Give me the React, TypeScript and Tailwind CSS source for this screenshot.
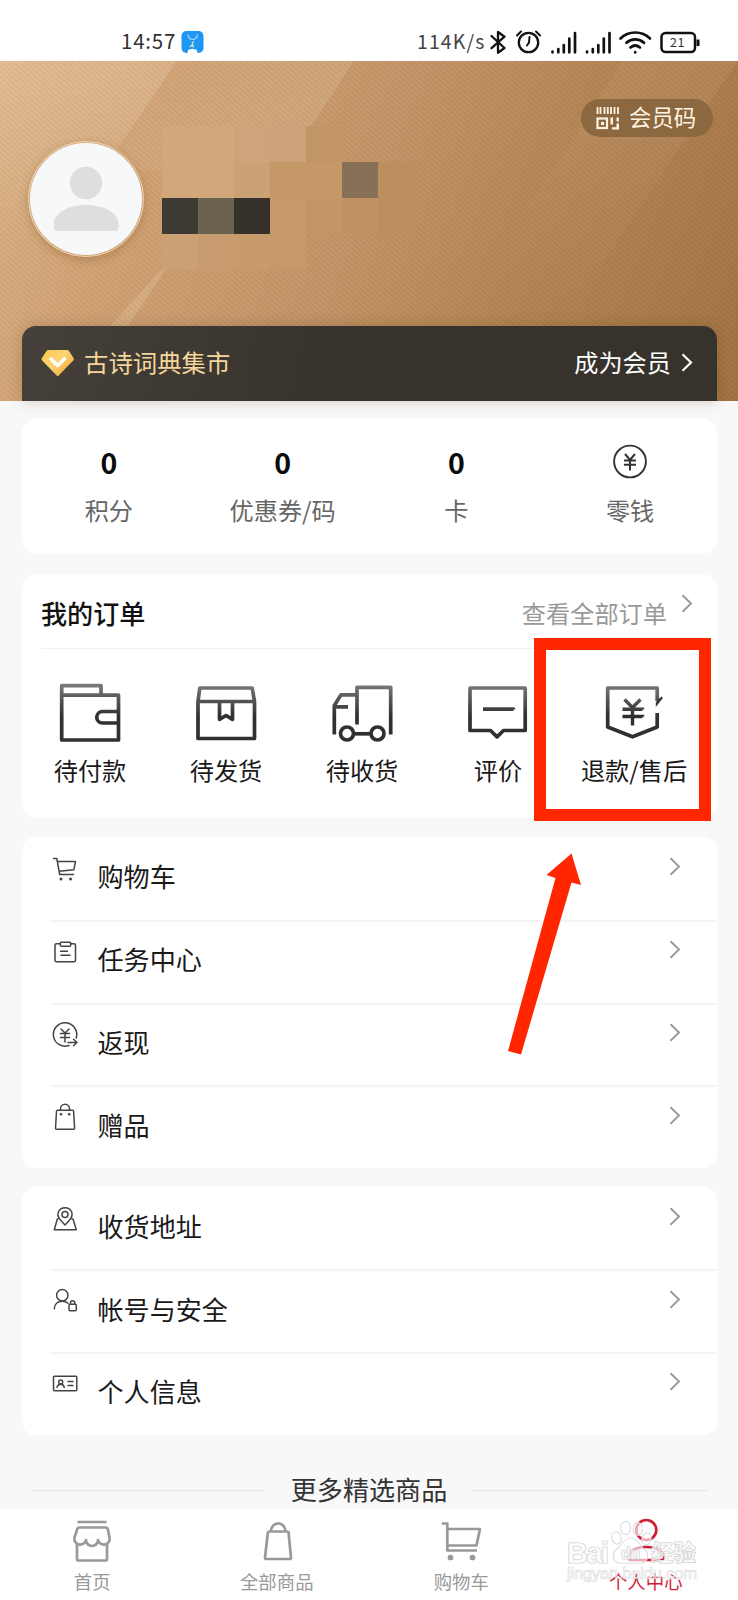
import React from "react";

type SvgProps = { box: string; w: number; h: number; className?: string; children: React.ReactNode };

function Draw({ box, w, h, className = "", children }: SvgProps) {
  return (
    <svg viewBox={box} width={w} height={h} fill="none" className={`block shrink-0 ${className}`}>
      {children}
    </svg>
  );
}

function Chevron({ className = "", width = 1.9 }: { className?: string; width?: number }) {
  return (
    <Draw box="0 0 12 19" w={12} h={19} className={className}>
      <path d="M1.5 1.2L10 9.5L1.5 17.8" stroke="currentColor" strokeWidth={width} />
    </Draw>
  );
}

function StatusBar() {
  return (
    <div className="flex h-[61px] shrink-0 items-start bg-white pl-[121px] pt-[28px] text-[#333]">
      <span className="w-[60px] text-[20.5px] font-normal leading-[25px] tracking-[0.8px]">14:57</span>
      <Draw box="0 0 24 24" w={24} h={24} className="mt-[2px]">
        <rect x="0.5" y="1" width="22" height="22" rx="5" fill="#1f96f3" />
        <path d="M7 4.5a4.7 5 0 0 0 9.4 0" stroke="#a6d8ff" strokeWidth="1.2" />
        <path d="M6.500 23c0-3.500 2-4.500 3-3.500c1-1 3-1 4 0c1.500-1 3 1 3 3.500z" fill="#fff" />
        <path d="M9 17l2.500-2.500l1 3M11 13l2 -1.500" stroke="#cfe3b8" strokeWidth="1.500" />
      </Draw>
      <span className="ml-[212px] w-[73px] text-[19.5px] font-normal leading-[25px] tracking-[1.1px] text-[#444]">114K/s</span>
      <Draw box="488 28 215 28" w={215} h={28} className="-ml-[2px] text-black">
        <g stroke="#111" strokeWidth="2.300" strokeLinejoin="round" strokeLinecap="round">
          <path d="M491.500 36l13 12l-6.500 4.700v-20.700l6.500 4.700l-13 11.500" />
          <circle cx="528.500" cy="42.500" r="9.700" />
          <path d="M517 35.500l4-4M540 35.500l-4-4M529.500 37l-.5 5.500l-2 3" strokeWidth="2" />
        </g>
        <g stroke="#111" strokeWidth="2.700" strokeLinecap="round">
          <path d="M552.500 51.500v.8M558.300 49v3.300M563.800 45v7.300M569.300 38.500v13.800M575 33v19.300" />
          <path d="M587 51.500v.8M592.800 49v3.300M598.300 45v7.300M603.800 38.500v13.800M609.500 33v19.300" />
        </g>
        <g stroke="#111" strokeWidth="2.700" strokeLinecap="round">
          <path d="M620.500 38.500c8-8 21.500-8 29.500 0M626.500 42.800c5-4.500 12.500-4.500 17.500 0M630.500 47.500c3-2.500 6.500-2.500 9.500 0" />
          <path d="M635.200 52.200v.2" />
        </g>
        <rect x="661.500" y="33" width="33.500" height="19" rx="4" stroke="#111" strokeWidth="2.500" />
        <path d="M698 39.500v6.500" stroke="#111" strokeWidth="3" />
        <text x="677.500" y="47" textAnchor="middle" fontSize="12.500" fill="#333" letterSpacing="0.5">
          21
        </text>
      </Draw>
    </div>
  );
}

const mosaic = [
  "bg-[#d2a87b]", "bg-[#d2a87b]", "bg-[#cfa47a]", "bg-[#cba27a]", "bg-[#c19565]", "bg-transparent", "bg-transparent",
  "bg-[#d2a87b]", "bg-[#d2a87b]", "bg-[#cba273]", "bg-[#c49867]", "bg-[#c49867]", "bg-[#886f58]", "bg-[#bb8f60]",
  "bg-[#3d3a33]", "bg-[#6c634f]", "bg-[#36312a]", "bg-[#c59a68]", "bg-[#c59568]", "bg-[#c19164]", "bg-[#bb8f60]",
  "bg-[#cba073]", "bg-[#c99c70]", "bg-[#c79b6b]", "bg-[#c6996a]", "bg-transparent", "bg-transparent", "bg-transparent",
];

function Header() {
  return (
    <div className="relative flex h-[340px] shrink-0 flex-col justify-between bg-[linear-gradient(114deg,#dab184_0%,#cfa173_22%,#c19265_48%,#b28353_70%,#a07041_100%)]">
      <svg viewBox="0 61 738 340" className="absolute inset-0 h-full w-full" preserveAspectRatio="none">
        <defs>
          <linearGradient id="shardA" x1="20" y1="250" x2="90" y2="61" gradientUnits="userSpaceOnUse">
            <stop offset="0" stopColor="#fff" stopOpacity="0" />
            <stop offset="1" stopColor="#ffecd8" stopOpacity="0.2" />
          </linearGradient>
          <linearGradient id="shardB" x1="160" y1="61" x2="320" y2="165" gradientUnits="userSpaceOnUse">
            <stop offset="0" stopColor="#fff" stopOpacity="0" />
            <stop offset="1" stopColor="#ffe9cf" stopOpacity="0.18" />
          </linearGradient>
          <linearGradient id="shardC" x1="540" y1="300" x2="690" y2="61" gradientUnits="userSpaceOnUse">
            <stop offset="0" stopColor="#fff" stopOpacity="0" />
            <stop offset="1" stopColor="#ffdcc0" stopOpacity="0.08" />
          </linearGradient>
        </defs>
        <path d="M0 61H177L52 245L0 290Z" fill="url(#shardA)" />
        <path d="M177 61H354L282 170L130 170L104 168Z" fill="url(#shardB)" />
        <path d="M161 270H165L128 326H110Z" fill="#f4d9b8" fillOpacity="0.24" />
        <path d="M623 61H738L560 326H450Z" fill="url(#shardC)" />
      </svg>
      <div className="absolute inset-0 bg-[repeating-linear-gradient(42deg,rgba(120,70,20,0.06)_0px,rgba(120,70,20,0.06)_1.500px,rgba(255,235,200,0.03)_1.500px,rgba(255,235,200,0.03)_4px)]" />

      <div className="relative flex items-start pl-7">
        <div className="mt-[80px] flex h-[116px] w-[116px] items-center justify-center rounded-full border border-[#ecd2b2] shadow-[0_3px_10px_rgba(120,70,20,0.3)]">
          <div className="flex h-[112px] w-[112px] items-center justify-center rounded-full bg-[#f7f8fa]">
            <Draw box="54 166 65 66" w={65} h={66}>
              <circle cx="86" cy="183" r="16.200" fill="#dedede" />
              <path d="M54 228v-5c0-9 13-18 32.300-18s32.300 9 32.300 18v5q0 3-3 3h-58.600q-3 0-3-3z" fill="#dedede" />
            </Draw>
          </div>
        </div>
        <div className="ml-[18px] mt-[65px] grid grid-cols-[repeat(7,36px)] grid-rows-[repeat(4,36px)]">
          {mosaic.map((c, i) => (
            <div key={i} className={c} />
          ))}
        </div>
        <div className="ml-auto mr-[25px] mt-[38px] flex h-[38px] w-[132px] items-center rounded-full bg-[#8c6840] pl-[15px] text-[#fff3e3]">
          <Draw box="0 0 24 24" w={24} h={24}>
            <path d="M1.500 1v7M4.500 1v7M8.500 1v7M11.800 1v7M15 1v7M18.500 1v7M22 1v7" stroke="currentColor" strokeWidth="1.800" />
            <rect x="1.500" y="12.500" width="9.500" height="9.500" stroke="currentColor" strokeWidth="2.200" />
            <path d="M5 16h3v3H5zM14.500 11.500h2.500v7h-2.500zM20.500 11.500h2.300v4h-2.300zM20.500 17.500h2.500v6h-7v-2.200h4.500z" fill="currentColor" />
          </Draw>
          <span className="mb-[4px] ml-[9px] whitespace-nowrap text-[22.400px] leading-8">会员码</span>
        </div>
      </div>

      <div className="relative ml-[22px] mr-[21px] flex h-[75px] items-center rounded-t-[14px] bg-[linear-gradient(100deg,#45403a_0%,#37322b_45%,#37322b_100%)] pl-[19px] pr-[24px] shadow-[0_0_14px_rgba(70,40,10,0.22)]">
        <Draw box="41 349 34 28" w={34} h={28} className="-mt-[2px]">
          <defs>
            <linearGradient id="gem" x1="45" y1="350" x2="70" y2="376" gradientUnits="userSpaceOnUse">
              <stop offset="0" stopColor="#fbc94a" />
              <stop offset="0.45" stopColor="#fcd576" />
              <stop offset="1" stopColor="#f2a32e" />
            </linearGradient>
          </defs>
          <path d="M48.500 350h18.500q1.200 0 2 1l4.700 7.300q.7 1-.2 2l-14.800 15.200q-1 1-2 0l-14.800-15.200q-.9-1-.2-2l4.800-7.300q.8-1 2-1z" fill="url(#gem)" />
          <path d="M51 359l6.700 6.500l6.700-6.500" stroke="#fff" strokeWidth="3.600" strokeLinecap="round" strokeLinejoin="round" />
        </Draw>
        <span className="mb-[4px] ml-[9px] text-[24.400px] leading-8 text-[#f5d79c]">古诗词典集市</span>
        <span className="mb-[4px] ml-auto text-[24.200px] leading-8 text-white">成为会员</span>
        <Chevron className="-mt-[2px] ml-[10px] text-white" width={2.200} />
      </div>
    </div>
  );
}

function Stat({ label, children }: { label: string; children: React.ReactNode }) {
  return (
    <div className="flex w-[174px] flex-col items-center">
      <div className="flex h-[36px] items-center justify-center">{children}</div>
      <span className="mt-[14px] whitespace-nowrap text-[24.200px] leading-8 text-[#666]">{label}</span>
    </div>
  );
}

function Zero() {
  return <span className="text-[28.500px] font-bold leading-9 text-[#0a0a0a]">0</span>;
}

function Stats() {
  return (
    <div className="relative ml-[22px] mr-[21px] mt-[18px] flex h-[135px] shrink-0 rounded-[14px] bg-white pt-[25px]">
      <Stat label="积分"><Zero /></Stat>
      <Stat label="优惠券/码"><Zero /></Stat>
      <Stat label="卡"><Zero /></Stat>
      <Stat label="零钱">
        <Draw box="0 0 36 36" w={36} h={36} className="-mt-[2px]">
          <circle cx="18" cy="18.500" r="15.900" stroke="#333" strokeWidth="1.900" />
          <path d="M13 11l5 6l5-6M18 17v10.500M12 17.500h12M12 21.800h12" stroke="#333" strokeWidth="2" />
        </Draw>
      </Stat>
    </div>
  );
}

const orders = [
  {
    label: "待付款",
    box: "58 682 64 62",
    art: (
      <>
        <path d="M61.700 695.200V685.700H101V695M61.700 695.200H118.500V740H61.700Z" />
        <path d="M118 711.500H102.500a5.700 5.700 0 0 0 0 11.500H118" />
      </>
    ),
  },
  {
    label: "待发货",
    box: "194 682 64 62",
    art: (
      <>
        <path d="M199.800 688H252.200L254.500 701.500H198ZM198 701.500V738.500H254.500V701.500" />
        <path d="M219.500 703V719.300L226 715.500L232.500 719.300V703" />
      </>
    ),
  },
  {
    label: "待收货",
    box: "330 682 64 62",
    art: (
      <>
        <path d="M357 724.500V687.300H390.700V734.500M355.500 694.800H341L334.300 705.500V734.500M335 706.800H348" />
        <circle cx="347" cy="733.500" r="6.500" />
        <circle cx="377.500" cy="733.500" r="6.500" />
        <path d="M353.500 733.800H371" />
      </>
    ),
  },
  {
    label: "评价",
    box: "466 682 64 62",
    art: (
      <>
        <path d="M470 688H525.200V730.500H503.500L497 736.800L490.500 730.500H470Z" />
        <path d="M483 709.200H513.500V709.400" />
      </>
    ),
  },
  {
    label: "退款/售后",
    box: "602 682 64 62",
    art: (
      <>
        <path d="M657.200 701V688H607.700V727L632.500 736.800L657.200 727V713" />
        <path d="M655.800 703L655.800 707L663 698L661.500 696.500L657 700.500Z" fill="#3a3a3a" stroke="none" />
        <path d="M624.500 699.500L632.500 707.500L640.500 699.500M632.500 707.500V725.500M622.500 709.300H642.500V709.500M622.500 716.500H642.500V716.700" strokeLinejoin="miter" strokeWidth="3.400" />
      </>
    ),
  },
];

function Orders() {
  return (
    <div className="relative ml-[22px] mr-[21px] mt-5 flex h-[244px] shrink-0 flex-col rounded-[14px] bg-white">
      <svg width="0" height="0" className="absolute">
        <defs>
          <linearGradient id="ink" x1="0" y1="684" x2="0" y2="716" gradientUnits="userSpaceOnUse">
            <stop offset="0" stopColor="#7a7a7a" />
            <stop offset="1" stopColor="#303030" />
          </linearGradient>
        </defs>
      </svg>
      <div className="ml-[19px] mr-[19px] flex h-[75px] items-start border-b border-[#f0f0f0] pr-[5px]">
        <h2 className="mt-[23px] text-[26.100px] font-medium leading-8 text-[#111]">我的订单</h2>
        <span className="ml-auto mt-[23px] text-[24.200px] leading-8 text-[#999]">查看全部订单</span>
        <Chevron className="ml-[14px] mt-[20px] text-[#999]" />
      </div>
      <div className="flex pt-[33px]">
        {orders.map((o) => (
          <div key={o.label} className="flex w-[136px] flex-col items-center">
            <Draw box={o.box} w={64} h={62}>
              <g stroke="url(#ink)" strokeWidth="3.700" strokeLinejoin="round">
                {o.art}
              </g>
            </Draw>
            <span className="mt-[10px] whitespace-nowrap text-[24.200px] leading-8 text-[#1a1a1a]">{o.label}</span>
          </div>
        ))}
      </div>
      <div className="absolute left-[512px] top-[64px] h-[182.500px] w-[177px] border-[12px] border-[#ff2600]" />
    </div>
  );
}

type Item = { label: string; box: string; art: React.ReactNode };

const shopping: Item[] = [
  {
    label: "购物车",
    box: "50 854 30 30",
    art: (
      <>
        <path d="M53.500 858.500H56.800L59.700 874.500H73.500M57.200 861.500H75.500L73.800 869.800L59 871.200" />
        <circle cx="61" cy="879" r="1.500" fill="#444" stroke="none" />
        <circle cx="70.500" cy="879" r="1.500" fill="#444" stroke="none" />
      </>
    ),
  },
  {
    label: "任务中心",
    box: "50 936.75 30 30",
    art: (
      <>
        <path d="M60 943.500H56.500q-1.500 0-1.500 1.500V960q0 1.500 1.500 1.500H74q1.500 0 1.500-1.500V945q0-1.500-1.500-1.500H70.500" />
        <rect x="60.300" y="942" width="10.400" height="4" rx="1" />
        <path d="M60.500 951H67.500M61 955H70" />
      </>
    ),
  },
  {
    label: "返现",
    box: "50 1019.5 30 30",
    art: (
      <>
        <path d="M76.200 1037.500A11.700 11.700 0 1 0 69 1045" />
        <path d="M61 1028.500L65 1032.500L69 1028.500M65 1032.500V1041.500M60.500 1033H69.500M60.500 1037H69.500M68 1042H76.500M73.500 1038.800L77 1042L73.500 1045.200" />
      </>
    ),
  },
  {
    label: "赠品",
    box: "50 1102.25 30 30",
    art: (
      <>
        <path d="M57.500 1110.500H72.500q1 0 1.100 1L74.600 1128.500q0 1-1 1H56.500q-1 0-1-1L56.500 1111.500q.1-1 1-1ZM60.500 1110V1109a4.500 4.500 0 0 1 9 0V1110" />
        <circle cx="61" cy="1114.500" r="1.300" fill="#444" stroke="none" />
        <circle cx="69.200" cy="1114.500" r="1.300" fill="#444" stroke="none" />
      </>
    ),
  },
];

const account: Item[] = [
  {
    label: "收货地址",
    box: "50 1204 30 30",
    art: (
      <>
        <path d="M65 1225L60 1219.500C55.500 1214 59 1207.700 65 1207.700S74.500 1214 70 1219.500Z" />
        <circle cx="65" cy="1214.500" r="3" />
        <path d="M58 1219H57.300L54.300 1229.700H76.300L73 1219H72" />
      </>
    ),
  },
  {
    label: "帐号与安全",
    box: "50 1286.75 30 30",
    art: (
      <>
        <circle cx="62.300" cy="1296" r="5.700" />
        <path d="M54.300 1309.500C54.500 1305 57.500 1302 62.300 1302Q66 1302 68 1304" />
        <rect x="69" y="1305" width="7.300" height="6.500" rx="1" />
        <path d="M70.500 1305V1303.500a2 2 0 0 1 4.200 0V1305" />
      </>
    ),
  },
  {
    label: "个人信息",
    box: "50 1369.5 30 30",
    art: (
      <>
        <rect x="53.500" y="1376.800" width="23.300" height="14.500" rx="1" />
        <circle cx="60.700" cy="1382.500" r="2" />
        <path d="M57 1388Q57.500 1384.800 60.700 1384.800T64.200 1388M68 1382H73M68 1386H73" />
      </>
    ),
  },
];

function List({ items, className }: { items: Item[]; className: string }) {
  return (
    <div className={`ml-[22px] mr-[21px] shrink-0 rounded-[14px] bg-white pl-7 ${className}`}>
      {items.map((it, i) => (
        <div
          key={it.label}
          className={`flex h-[82.750px] items-start border-t-2 pr-[36px] ${i > 0 ? "border-[#f4f4f4]" : "border-transparent"}`}
        >
          <Draw box={it.box} w={30} h={30} className="mt-[15px]">
            <g stroke="#444" strokeWidth="1.500" strokeLinejoin="round" strokeLinecap="round">
              {it.art}
            </g>
          </Draw>
          <span className="ml-[17.500px] mt-[19.300px] text-[26.100px] leading-9 text-[#1a1a1a]">{it.label}</span>
          <Chevron className="ml-auto mt-[18.300px] text-[#999]" />
        </div>
      ))}
    </div>
  );
}

function More() {
  return (
    <div className="flex h-[74px] shrink-0 items-start gap-[25px] overflow-hidden px-[30px] pt-[36px]">
      <div className="mt-[19px] h-px flex-1 bg-[#e6e6e6]" />
      <span className="text-[26.100px] leading-9 text-[#333]">更多精选商品</span>
      <div className="mt-[19px] h-px flex-1 bg-[#e6e6e6]" />
    </div>
  );
}

const tabs = [
  {
    label: "首页",
    box: "69.500 1516 46 46",
    active: false,
    art: (
      <>
        <path d="M78 1521H107M79.500 1526.500H106.500Q108 1526.500 108.300 1528L110 1536.500a5.500 5.500 0 0 1-11.500 2.500a6 6 0 0 1-12 0a5.500 5.500 0 0 1-11.500-2.500L77.800 1528Q78.100 1526.500 79.500 1526.500Z" />
        <path d="M77.500 1543V1558Q77.500 1559.500 79 1559.500H106Q107.500 1559.500 107.500 1558V1543" />
      </>
    ),
  },
  {
    label: "全部商品",
    box: "254 1516 46 46",
    active: false,
    art: (
      <path d="M269.500 1530.500H287Q288.500 1530.500 288.600 1532L291 1556.500Q291 1558 289.500 1558H266.500Q265 1558 265 1556.500L267.800 1532Q268 1530.500 269.500 1530.500ZM271 1530.500a7.200 8.200 0 0 1 14.400 0" />
    ),
  },
  {
    label: "购物车",
    box: "438 1516 46 46",
    active: false,
    art: (
      <>
        <path d="M441.700 1522.500H447.300V1549.500H477M447.300 1528H480L476.500 1544.500H447.300" />
        <circle cx="450.500" cy="1556.500" r="1.500" fill="currentColor" />
        <circle cx="472.500" cy="1556.500" r="1.500" fill="currentColor" />
      </>
    ),
  },
  {
    label: "个人中心",
    box: "623 1516 46 46",
    active: true,
    art: (
      <>
        <circle cx="646.300" cy="1529" r="10" />
        <path d="M630.500 1559H662Q664.500 1559 664 1556C662.500 1549 656 1546 646.300 1546S630 1549 628.500 1556Q628 1559 630.500 1559Z" />
      </>
    ),
  },
];

function TabBar() {
  return (
    <div className="relative flex h-[92px] shrink-0 bg-white">
      {tabs.map((t) => (
        <div key={t.label} className={`flex w-1/4 flex-col items-center pt-[8px] ${t.active ? "text-[#cf1f38]" : "text-[#999]"}`}>
          <Draw box={t.box} w={46} h={46}>
            <g stroke="currentColor" strokeWidth="2.700" strokeLinejoin="round">
              {t.art}
            </g>
          </Draw>
          <span className="mt-[6px] text-[18.400px] leading-6">{t.label}</span>
        </div>
      ))}
      <svg viewBox="560 1508 150 92" width="150" height="92" className="absolute left-[560px] top-0">
        <g fill="#fff" fillOpacity="0.6" stroke="#d3d3d3" strokeWidth="1.200" paintOrder="stroke">
          <text x="567" y="1562" fontSize="29" fontWeight="700" textLength="42" className="font-['Liberation_Sans']">Bai</text>
          <ellipse cx="616.500" cy="1537" rx="4.500" ry="6" transform="rotate(-15 616.500 1537)" />
          <ellipse cx="625.500" cy="1527" rx="4.700" ry="6.500" />
          <ellipse cx="638" cy="1528" rx="4.700" ry="6.500" />
          <ellipse cx="646.500" cy="1538" rx="4.500" ry="6" transform="rotate(20 646.500 1538)" />
          <path d="M631 1537c6 0 8 7 13 11c6 5 4 14-3 14h-20c-8 0-10-9-4-14c5-4 8-11 14-11z" />
          <text x="621" y="1558" fontSize="16" fontWeight="700" textLength="19" className="font-['Liberation_Sans']">du</text>
          <text x="651" y="1560" fontSize="22.500" fontWeight="700" textLength="45">经验</text>
        </g>
        <text x="567" y="1578" fontSize="16.500" textLength="130" fill="#fff" fillOpacity="0.5" stroke="#dedede" strokeWidth="0.700" className="font-['Liberation_Sans']">
          jingyan.baidu.com
        </text>
      </svg>
    </div>
  );
}

export default function App() {
  return (
    <div className="relative flex h-[1600px] w-[738px] flex-col overflow-hidden bg-[#f8f8f8] font-['Noto_Sans_CJK_SC',sans-serif]">
      <StatusBar />
      <Header />
      <Stats />
      <Orders />
      <List items={shopping} className="mt-[19px]" />
      <List items={account} className="mt-[18.500px]" />
      <More />
      <TabBar />
      <svg viewBox="500 850 90 210" width="90" height="210" className="absolute left-[500px] top-[850px]">
        <path d="M571.500 853.500L546.500 875L555.500 878L508 1051L521 1054.500L571.500 882.500L581 885Z" fill="#ff2600" />
      </svg>
    </div>
  );
}
